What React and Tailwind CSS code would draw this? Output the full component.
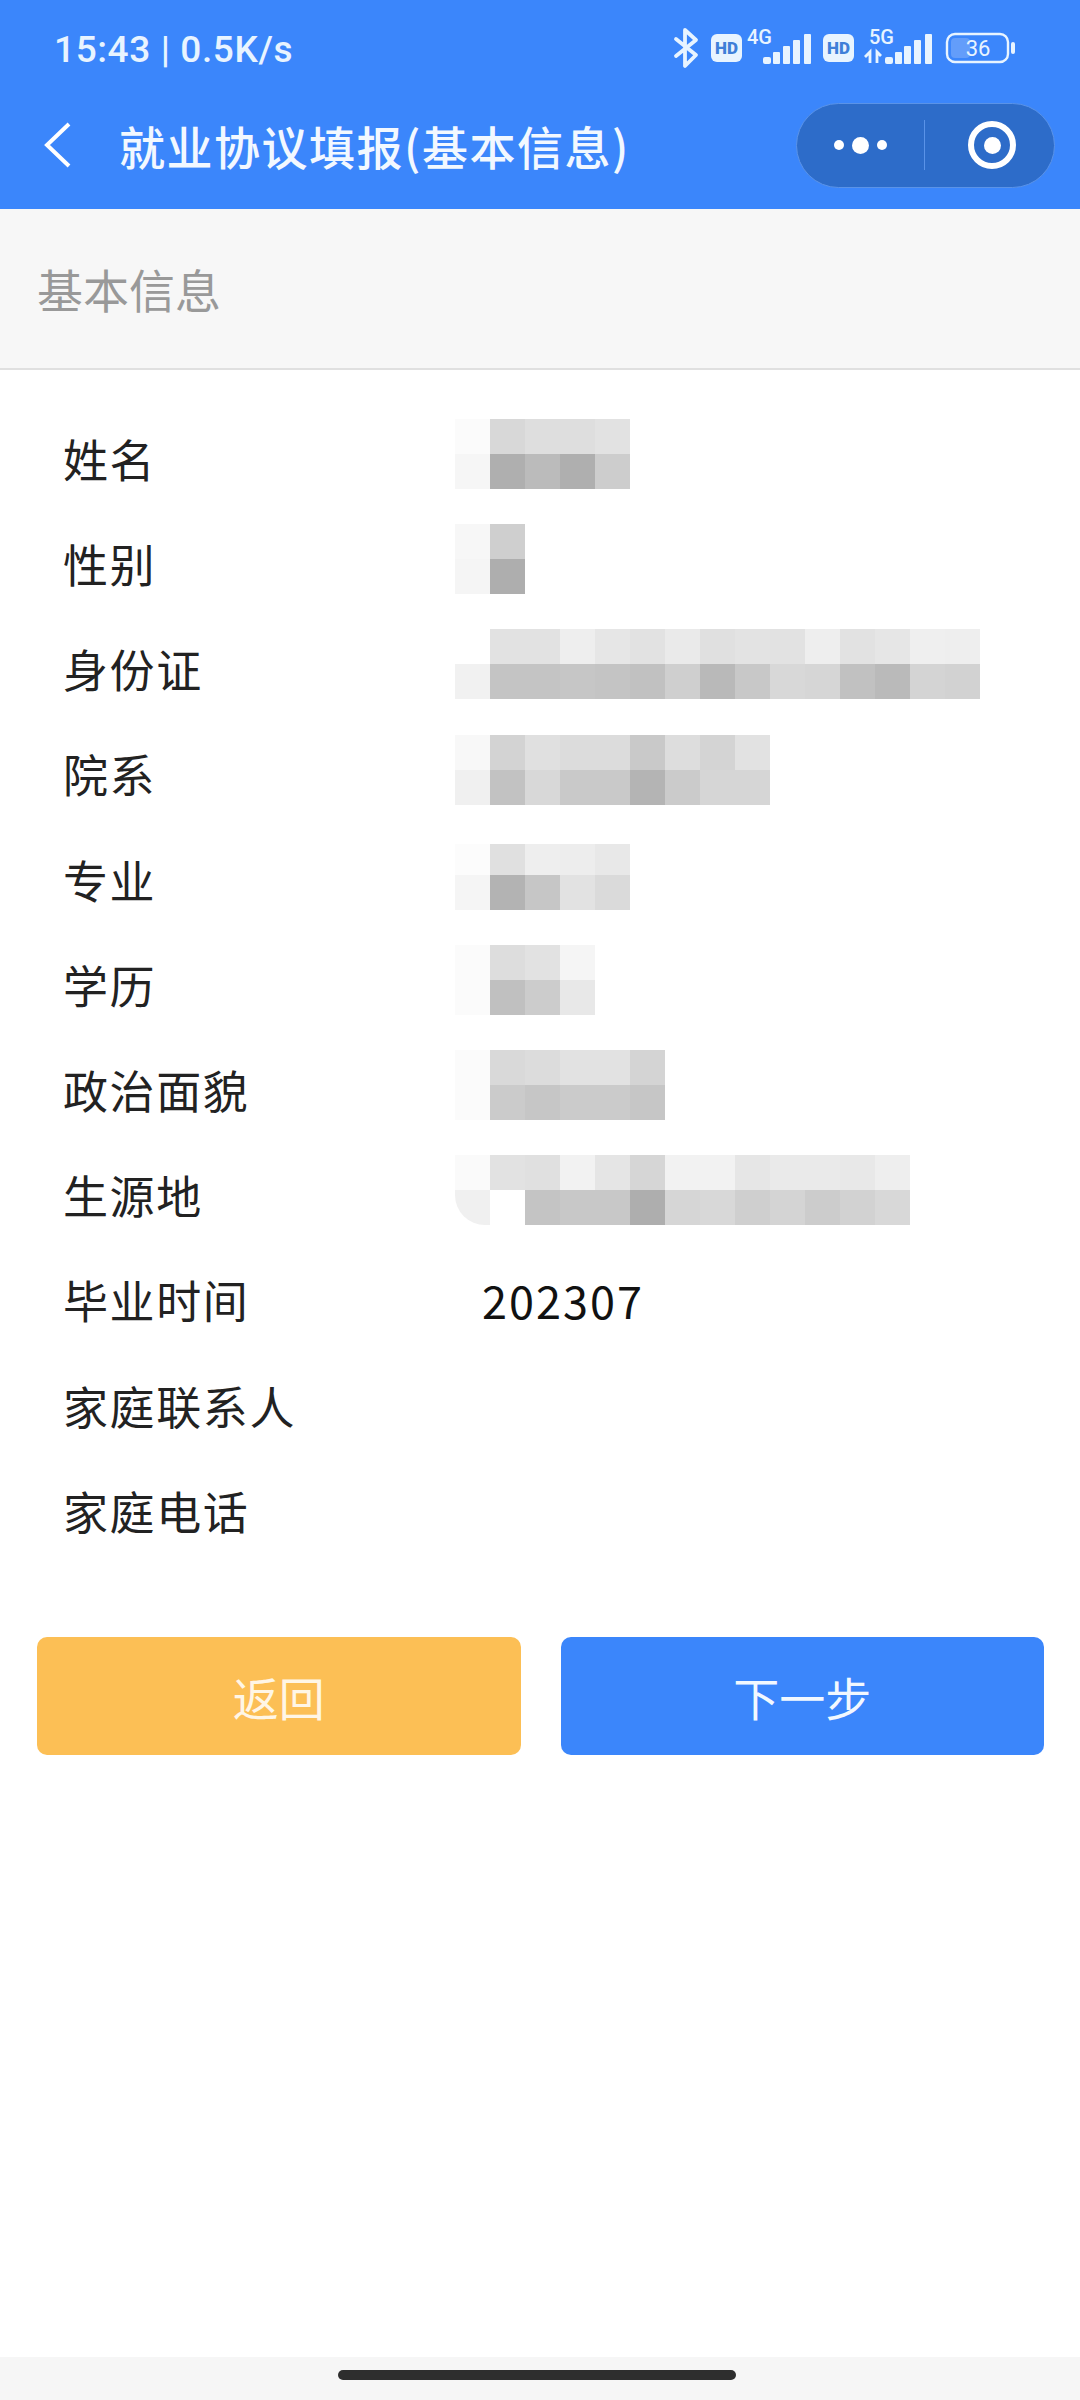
const CJK = "font-['Noto_Sans_CJK_SC','Noto_Sans',sans-serif]";

// pixelated values: first line, second line of each blurred field
const rows = [
  {
    label: "姓名",
    top: ["bg-[#fbfbfb]", "bg-[#d8d8d8]", "bg-[#dedede]", "bg-[#dedede]", "bg-[#e2e2e2]"],
    bottom: ["bg-[#f6f6f6]", "bg-[#afafaf]", "bg-[#bbbbbb]", "bg-[#afafaf]", "bg-[#cdcdcd]"],
  },
  {
    label: "性别",
    top: ["bg-[#f7f7f7]", "bg-[#cfcfcf]"],
    bottom: ["bg-[#f5f5f5]", "bg-[#aeaeae]"],
  },
  {
    label: "身份证",
    top: ["bg-white", "bg-[#e2e2e2]", "bg-[#e2e2e2]", "bg-[#eeeeee]", "bg-[#e6e6e6]", "bg-[#e2e2e2]", "bg-[#eaeaea]", "bg-[#e0e0e0]", "bg-[#e3e3e3]", "bg-[#e2e2e2]", "bg-[#eeeeee]", "bg-[#e2e2e2]", "bg-[#e6e6e6]", "bg-[#efefef]", "bg-[#eeeeee]"],
    bottom: ["bg-[#f1f1f1]", "bg-[#c4c4c4]", "bg-[#c4c4c4]", "bg-[#c6c6c6]", "bg-[#c4c4c4]", "bg-[#c1c1c1]", "bg-[#cfcfcf]", "bg-[#b9b9b9]", "bg-[#c8c8c8]", "bg-[#d8d8d8]", "bg-[#d6d6d6]", "bg-[#c1c1c1]", "bg-[#bababa]", "bg-[#d4d4d4]", "bg-[#d2d2d2]"],
  },
  {
    label: "院系",
    top: ["bg-[#f8f8f8]", "bg-[#d3d3d3]", "bg-[#e0e0e0]", "bg-[#dcdcdc]", "bg-[#dcdcdc]", "bg-[#c9c9c9]", "bg-[#dddddd]", "bg-[#d4d4d4]", "bg-[#e2e2e2]"],
    bottom: ["bg-[#f0f0f0]", "bg-[#c2c2c2]", "bg-[#d8d8d8]", "bg-[#c9c9c9]", "bg-[#c9c9c9]", "bg-[#b4b4b4]", "bg-[#cbcbcb]", "bg-[#d6d6d6]", "bg-[#d6d6d6]"],
  },
  {
    label: "专业",
    short: true,
    top: ["bg-[#fcfcfc]", "bg-[#e0e0e0]", "bg-[#eeeeee]", "bg-[#ededed]", "bg-[#e8e8e8]"],
    bottom: ["bg-[#f5f5f5]", "bg-[#b3b3b3]", "bg-[#c6c6c6]", "bg-[#e2e2e2]", "bg-[#dadada]"],
  },
  {
    label: "学历",
    top: ["bg-[#fbfbfb]", "bg-[#dddddd]", "bg-[#e2e2e2]", "bg-[#f5f5f5]"],
    bottom: ["bg-[#fbfbfb]", "bg-[#c0c0c0]", "bg-[#cccccc]", "bg-[#e8e8e8]"],
  },
  {
    label: "政治面貌",
    top: ["bg-[#fbfbfb]", "bg-[#d9d9d9]", "bg-[#dcdcdc]", "bg-[#e2e2e2]", "bg-[#e2e2e2]", "bg-[#d4d4d4]"],
    bottom: ["bg-[#fbfbfb]", "bg-[#cbcbcb]", "bg-[#c6c6c6]", "bg-[#cbcbcb]", "bg-[#cbcbcb]", "bg-[#c6c6c6]"],
  },
  {
    label: "生源地",
    top: ["bg-[#fafafa]", "bg-[#e2e2e2]", "bg-[#e0e0e0]", "bg-[#f2f2f2]", "bg-[#e5e5e5]", "bg-[#d6d6d6]", "bg-[#f2f2f2]", "bg-[#f2f2f2]", "bg-[#e6e6e6]", "bg-[#eaeaea]", "bg-[#eaeaea]", "bg-[#e8e8e8]", "bg-[#eeeeee]"],
    bottom: ["bg-[#f0f0f0] rounded-bl-[30px]", "bg-white", "bg-[#c4c4c4]", "bg-[#c8c8c8]", "bg-[#c8c8c8]", "bg-[#aeaeae]", "bg-[#d6d6d6]", "bg-[#d8d8d8]", "bg-[#cfcfcf]", "bg-[#d4d4d4]", "bg-[#cccccc]", "bg-[#d2d2d2]", "bg-[#d8d8d8]"],
  },
  { label: "毕业时间", value: "202307" },
  { label: "家庭联系人" },
  { label: "家庭电话" },
];

const Mosaic = ({ top, bottom, short }) => (
  <div className={`flex flex-col mb-[9px] ${short ? "pt-[4px]" : ""}`}>
    <div className={`flex ${short ? "h-[31px]" : "h-[35px]"}`}>
      {top.map((cell, index) => (
        <div key={index} className={`w-[35px] ${cell}`} />
      ))}
    </div>
    <div className="flex h-[35px]">
      {bottom.map((cell, index) => (
        <div key={index} className={`w-[35px] ${cell}`} />
      ))}
    </div>
  </div>
);

const StatusIcons = () => (
  <svg width="350" height="60" viewBox="0 -8 350 60" fill="none">
    {/* bluetooth */}
    <path d="M3 11 L23 27 L12 38 V2 L23 12 L3 28" stroke="#e8f4ff" strokeWidth="3.8" strokeLinecap="round" strokeLinejoin="round" />
    {/* HD badge */}
    <rect x="38" y="6" width="31" height="28" rx="6" fill="#e8f4ff" />
    <text x="53.5" y="26" textAnchor="middle" fontFamily="Roboto, sans-serif" fontWeight="900" fontSize="17" fill="#3f7fd8">HD</text>
    <text x="74" y="16" fontFamily="Roboto, sans-serif" fontWeight="500" fontSize="20" fill="#e8f4ff">4G</text>
    {/* signal 1 */}
    <rect x="90" y="29" width="8" height="7" rx="2" fill="#e8f4ff" />
    <rect x="100" y="24" width="7" height="12" rx="1" fill="#e8f4ff" />
    <rect x="110" y="18" width="7" height="18" rx="1" fill="#e8f4ff" />
    <rect x="120" y="12" width="7" height="24" rx="1" fill="#e8f4ff" />
    <rect x="131" y="6" width="7" height="30" rx="1" fill="#e8f4ff" />
    {/* HD badge */}
    <rect x="150" y="6" width="31" height="28" rx="6" fill="#e8f4ff" />
    <text x="165.5" y="26" textAnchor="middle" fontFamily="Roboto, sans-serif" fontWeight="900" fontSize="17" fill="#3f7fd8">HD</text>
    <text x="196" y="16" fontFamily="Roboto, sans-serif" fontWeight="500" fontSize="20" fill="#e8f4ff">5G</text>
    {/* data arrows */}
    <path d="M192 29 L197 24 V35 M204 35 V24 L208 28" stroke="#e8f4ff" strokeWidth="2.8" />
    {/* signal 2 */}
    <rect x="212" y="29" width="8" height="7" rx="2" fill="#e8f4ff" />
    <rect x="222" y="24" width="7" height="12" rx="1" fill="#e8f4ff" />
    <rect x="231" y="18" width="7" height="18" rx="1" fill="#e8f4ff" />
    <rect x="241" y="12" width="7" height="24" rx="1" fill="#e8f4ff" />
    <rect x="252" y="6" width="7" height="30" rx="1" fill="#e8f4ff" />
    {/* battery */}
    <rect x="274" y="6" width="61" height="28" rx="8" stroke="#e8f4ff" strokeWidth="2.4" />
    <rect x="278" y="10" width="19" height="20" rx="4" fill="#639dfa" />
    <rect x="338" y="14" width="4" height="12" rx="2" fill="#e8f4ff" />
    <text x="305" y="28" textAnchor="middle" fontFamily="Roboto, sans-serif" fontSize="22" fill="#e8f4ff">36</text>
  </svg>
);

const Capsule = () => (
  <div className="flex items-center w-[259px] h-[85px] rounded-full bg-[#2d6cc9] border border-[#5a93e8]">
    <div className="flex flex-1 items-center justify-center gap-[8px]">
      <div className="w-[10px] h-[10px] rounded-full bg-white" />
      <div className="w-[17px] h-[17px] rounded-full bg-white" />
      <div className="w-[10px] h-[10px] rounded-full bg-white" />
    </div>
    <div className="w-px h-[50px] bg-[#5a93e8]" />
    <div className="flex w-[129px] items-center justify-center pl-[5px]">
      <div className="flex items-center justify-center w-[48px] h-[48px] rounded-full border-[6px] border-white">
        <div className="w-[17px] h-[17px] rounded-full bg-white" />
      </div>
    </div>
  </div>
);

const App = () => {
  return (
    <div className={`flex flex-col h-[2400px] w-[1080px] bg-white ${CJK}`}>
      <div className="flex flex-col h-[209px] shrink-0 bg-[#3b86fb]">
        <div className="flex items-center justify-between h-[100px] pl-[54px] pr-[57px]">
          <span className="font-['Roboto',sans-serif] font-medium text-[37px] tracking-[0.6px] text-[#e8f4ff]">
            15:43 | 0.5K/s
          </span>
          <StatusIcons />
        </div>
        <div className="flex items-center h-[90px] pr-[25px]">
          <div className="w-[119px] pl-[44px]">
            <svg width="28" height="48" viewBox="0 0 28 48" fill="none">
              <path d="M25 3 L3 24 L25 45" stroke="white" strokeWidth="4" />
            </svg>
          </div>
          <span className="flex-1 font-medium text-[46px] tracking-[1.5px] text-[#f2f8ff]">
            就业协议填报(基本信息)
          </span>
          <Capsule />
        </div>
      </div>

      <div className="flex items-center h-[161px] shrink-0 pl-[37px] bg-[#f7f7f7] border-b-2 border-[#e0e0e0]">
        <span className="text-[46px] text-[#999999]">基本信息</span>
      </div>

      <div className="flex flex-col shrink-0 pt-[36px]">
        {rows.map((row) => (
          <div key={row.label} className="flex items-center h-[105.2px]">
            <div className="w-[455px] shrink-0 pl-[63px] text-[45px] tracking-[1.6px] text-[#222222]">
              {row.label}
            </div>
            {row.top && <Mosaic top={row.top} bottom={row.bottom} short={row.short} />}
            {row.value && (
              <div className="pl-[27px] text-[45px] tracking-[2px] text-[#111111]">
                {row.value}
              </div>
            )}
          </div>
        ))}
      </div>

      <div className="flex shrink-0 gap-[40px] pl-[37px] pr-[36px] mt-[74px]">
        <button className="flex-1 h-[118px] rounded-[10px] bg-[#fcbf55] text-[46px] text-[#fff6e6]">
          返回
        </button>
        <button className="flex-1 h-[118px] rounded-[10px] bg-[#3b86fb] text-[46px] text-[#f2f8ff]">
          下一步
        </button>
      </div>

      <div className="flex-1" />

      <div className="flex justify-center h-[43px] shrink-0 pt-[13px] pr-[6px] bg-[#f6f6f6]">
        <div className="w-[398px] h-[10px] rounded-full bg-[#2e2e2e]" />
      </div>
    </div>
  );
};

export default App;
